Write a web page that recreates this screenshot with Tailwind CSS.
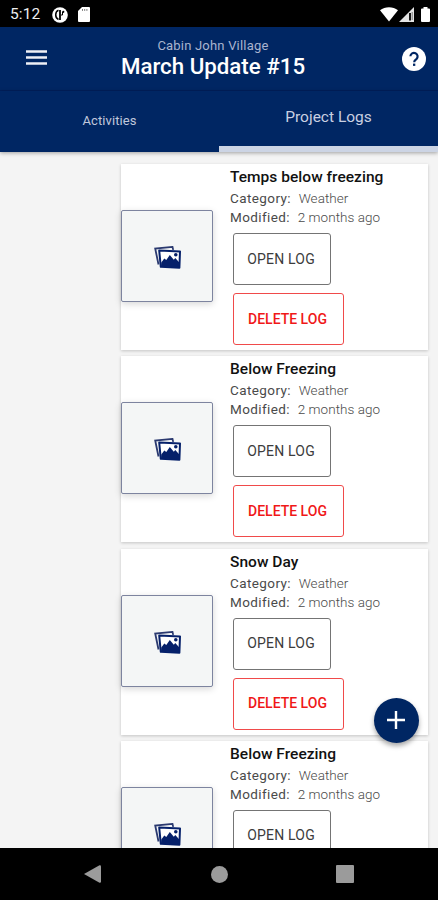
<!DOCTYPE html>
<html lang="en">
<head>
    <meta charset="UTF-8">
    <meta name="viewport" content="width=device-width, initial-scale=1.0">
    <title>Project Logs</title>
    <script src="https://cdn.jsdelivr.net/npm/@tailwindcss/browser@4"></script>
</head>
<body class="font-[Roboto,sans-serif] bg-[#f4f4f4]">
<div class="relative flex flex-col h-[900px] w-[438px] overflow-hidden">

    <!-- Status bar -->
    <div class="flex h-[27px] shrink-0 items-center bg-black pl-[10px] pr-[8px] pt-[2px] text-white">
        <span class="w-[42px] text-[15.5px] leading-none tracking-[0.1px] text-[#eee]">5:12</span>
        <svg class="h-4 w-4" viewBox="0 0 16 16">
            <circle cx="8" cy="8" r="7.8" fill="#fff"/>
            <path d="M6.500 3.200C2.800 4.500 2.800 11 6.500 12.500" fill="none" stroke="#000" stroke-width="1.500"/>
            <path d="M8 3v10" stroke="#000" stroke-width="1.800"/>
            <path d="M9 8h1.500V5" fill="none" stroke="#000" stroke-width="1"/>
            <circle cx="11.300" cy="4.800" r="1.100" fill="#000"/>
        </svg>
        <svg class="ml-[10px] h-[15px] w-3" viewBox="0 0 12 15">
            <path d="M4 0h7a1 1 0 0 1 1 1v13a1 1 0 0 1-1 1H1a1 1 0 0 1-1-1V4z" fill="#fff"/>
            <path d="M4.500 2.200v1.500M6.700 2.200v1.500M8.900 2.200v1.500" stroke="#555" stroke-width="1"/>
        </svg>
        <svg class="ml-auto h-[15px] w-[18px]" viewBox="0 0 18 15">
            <path d="M0 3.300C5-.8 13-.8 18 3.300L9 14.500z" fill="#fff"/>
        </svg>
        <svg class="ml-px h-[15px] w-[15px]" viewBox="0 0 15 15">
            <path d="M0 15 15 0v15z" fill="#e4e4e4"/>
            <path d="M11 6v7.500" stroke="#000" stroke-width="1.800"/>
            <path d="M13.200 5v8" stroke="#777" stroke-width="1"/>
        </svg>
        <svg class="ml-[7px] h-[15px] w-[9px]" viewBox="0 0 9 15">
            <path d="M2.500 0h4v1.500H8a1 1 0 0 1 1 1V14a1 1 0 0 1-1 1H1a1 1 0 0 1-1-1V2.500a1 1 0 0 1 1-1h1.500z" fill="#fff"/>
        </svg>
    </div>

    <!-- App bar -->
    <header class="flex h-16 shrink-0 items-center justify-between border-b border-[#001f5c] bg-[#002663] pl-[26px] pr-3 text-white">
        <button aria-label="Menu">
            <svg class="mb-[2px] h-[15px] w-[21px]" viewBox="0 0 21 15">
                <path d="M0 1.500h21M0 7.500h21M0 13.500h21" stroke="#eef0f6" stroke-width="2.400"/>
            </svg>
        </button>
        <div class="mr-[23px] text-center">
            <div class="text-[13px] leading-[16px] tracking-[0.2px] text-[#a9b4cf]">Cabin John Village</div>
            <h1 class="text-[22.3px] font-medium leading-[25px]">March Update #15</h1>
        </div>
        <button aria-label="Help">
            <svg class="h-6 w-6" viewBox="0 0 24 24">
                <circle cx="12" cy="12" r="12" fill="#fff"/>
                <path d="M8.400 9.300a3.600 3.600 0 1 1 6 2.800c-1.500 1.200-2.200 1.600-2.200 3.200" fill="none" stroke="#002663" stroke-width="2.200"/>
                <path d="M11 16.600h2.300v2.300H11z" fill="#002663"/>
            </svg>
        </button>
    </header>

    <!-- Tabs -->
    <nav class="z-10 grid h-[61px] shrink-0 grid-cols-2 bg-[#002663] shadow-[0_1px_4px_rgba(0,0,0,0.35)]">
        <button class="pb-[1px] text-[13px] tracking-[0.1px] text-[#c0c8dc]">Activities</button>
        <button class="border-b-[6px] border-[#ccd4e4] pb-[2px] text-[15.5px] text-[#c9d0e2]">Project Logs</button>
    </nav>

    <!-- Log list, filled in below -->
    <main id="logs" class="flex min-h-0 flex-1 flex-col gap-[6.300px] overflow-hidden pl-[121px] pr-[10px] pt-3"></main>

    <!-- Add log -->
    <button aria-label="Add log" class="absolute left-[374px] top-[698px] flex h-[45px] w-[45px] items-center justify-center rounded-full bg-[#002663] shadow-[0_3px_5px_rgba(0,0,0,0.35)]">
        <svg class="mr-[2px] mb-[2px] h-[18px] w-[18px]" viewBox="0 0 18 18">
            <path d="M9 0v18M0 9h18" stroke="#fff" stroke-width="2.400"/>
        </svg>
    </button>

    <!-- Android navigation -->
    <footer class="flex h-[52px] shrink-0 items-center justify-between bg-black pl-[84px] pr-[84px]">
        <svg class="h-[18px] w-[17px]" viewBox="0 0 17 18"><path d="M0 9 15.500.3Q17 0 17 1.500v15q0 1.500-1.500 1.200z" fill="#9b9b9b"/></svg>
        <span class="ml-[1px] h-[17px] w-[17px] rounded-full bg-[#9b9b9b]"></span>
        <span class="h-[18px] w-[18px] rounded-[1px] bg-[#9b9b9b]"></span>
    </footer>
</div>

<script>
    const logs = [
        { title: 'Temps below freezing', category: 'Weather', modified: '2 months ago' },
        { title: 'Below Freezing', category: 'Weather', modified: '2 months ago' },
        { title: 'Snow Day', category: 'Weather', modified: '2 months ago' },
        { title: 'Below Freezing', category: 'Weather', modified: '2 months ago' }
    ];

    document.getElementById('logs').innerHTML = logs.map(log => `
        <article class="flex h-[186px] shrink-0 items-center bg-white shadow-[0_1px_3px_rgba(0,0,0,0.2)]">
            <div class="mb-[2px] flex h-[92px] w-[92px] shrink-0 items-center justify-center rounded-[2px] border border-[#7d849f] bg-[#f4f6f6] shadow-[0_2px_7px_rgba(0,0,0,0.16)]">
                <svg class="mt-[3px] h-[23px] w-[27px]" viewBox="0 0 27 23">
                    <path d="M4.500 18.500 1.200 2.500 18.500.9l.7 3" fill="none" stroke="#2b3a70" stroke-width="1.800"/>
                    <path d="m5.200 4.500 20.800.9-.6 16.400-18.600-1z" fill="#fff" stroke="#05206a" stroke-width="2" stroke-linejoin="round"/>
                    <path d="m7 20.500.3-4 3-4 2 1.600 3.500-5 4 4.600 1.500-1.600 4 4.400v5z" fill="#05206a"/>
                    <circle cx="21.800" cy="8.800" r="1.800" fill="#05206a"/>
                </svg>
            </div>
            <div class="flex h-full flex-col items-start pl-[17px] pt-[3px]">
                <h2 class="text-[15.500px] font-medium leading-5 tracking-[0.03px] text-[#111]">${log.title}</h2>
                <p class="mt-[2px] text-[13.500px] leading-[19px] tracking-[0.4px] text-[#4a4a4a]">Category: <span class="ml-[4px] font-light tracking-[0.03px]">${log.category}</span></p>
                <p class="text-[13.500px] leading-[19px] tracking-[0.4px] text-[#4a4a4a]">Modified: <span class="ml-[4px] font-light tracking-[0.03px]">${log.modified}</span></p>
                <button class="ml-[3px] mt-[6px] h-[52px] w-[98px] rounded-[3px] border border-[#747474] pr-[2px] text-[14px] tracking-[0.2px] text-[#3c3c3c]">OPEN LOG</button>
                <button class="ml-[3px] mt-2 h-[52px] w-[111px] rounded-[3px] border border-[#f04a4a] pr-[2px] text-[14px] font-medium text-[#f01818]">DELETE LOG</button>
            </div>
        </article>`).join('');
</script>
</body>
</html>
